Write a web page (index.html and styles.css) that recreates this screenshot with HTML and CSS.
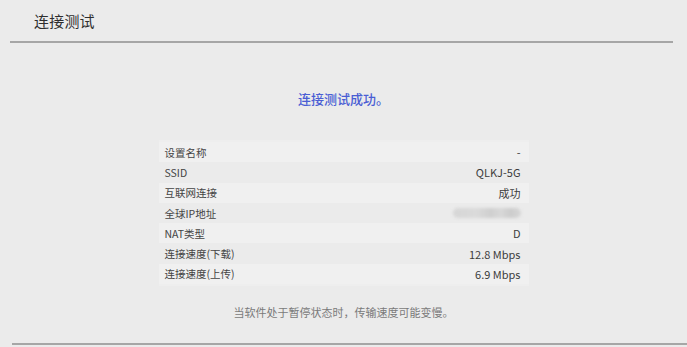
FILE: index.html
```html
<!DOCTYPE html>
<html lang="zh">
<head>
<meta charset="utf-8">
<link rel="stylesheet" href="styles.css">
</head>
<body>
<div class="page">
  <header class="header"><h1 class="title">连接测试</h1></header>
  <main class="content">
    <p class="success">连接测试成功。</p>
    <div class="table">
      <div class="row"><span class="k">设置名称</span><span class="v">-</span></div>
      <div class="row"><span class="k">SSID</span><span class="v">QLKJ-5G</span></div>
      <div class="row"><span class="k">互联网连接</span><span class="v">成功</span></div>
      <div class="row"><span class="k">全球IP地址</span><span class="v"><span class="blur"></span></span></div>
      <div class="row"><span class="k">NAT类型</span><span class="v">D</span></div>
      <div class="row"><span class="k">连接速度(下载)</span><span class="v">12.8 Mbps</span></div>
      <div class="row"><span class="k">连接速度(上传)</span><span class="v">6.9 Mbps</span></div>
    </div>
    <p class="note">当软件处于暂停状态时，传输速度可能变慢。</p>
  </main>
  <div class="bottom"></div>
</div>
</body>
</html>
```
FILE: styles.css
```css
html, body {
  margin: 0;
  padding: 0;
  background: #ebebeb;
}
body {
  font-family: "Noto Sans CJK SC", "Noto Sans", sans-serif;
  color: #3a3a3a;
  width: 687px;
  height: 347px;
  overflow: hidden;
}
.page {
  display: flex;
  flex-direction: column;
  height: 347px;
}
.header {
  margin: 0 14px 0 10px;
  height: 41px;
  border-bottom: 2px solid #a6a6a6;
  display: flex;
  align-items: center;
  padding-left: 24px;
}
.title {
  margin: 0;
  font-size: 15px;
  font-weight: 400;
  color: #2e2e2e;
  letter-spacing: 0.2px;
}
.content {
  flex: 1;
  display: flex;
  flex-direction: column;
  align-items: center;
}
.success {
  margin: 47px 0 0 0;
  font-size: 13px;
  line-height: 18px;
  color: #4a5ed4;
  font-weight: 500;
}
.table {
  margin-top: 32px;
  width: 370px;
  margin-left: 0;
  display: flex;
  flex-direction: column;
  padding: 2px 0;
  background: #eeeeee;
}
.row {
  height: 20.3px;
  display: flex;
  align-items: center;
  justify-content: space-between;
  padding: 0 8px 0 6px;
  font-size: 10.5px;
  color: #444;
}
.row:nth-child(odd) {
  background: #f0f0f0;
}
.row:nth-child(even) {
  background: #ebebeb;
}
.v {
  color: #3c3c3c;
  font-size: 11px;
}
.blur {
  display: block;
  width: 68px;
  height: 10px;
  border-radius: 5px;
  background: linear-gradient(90deg, #d6d6d6 0%, #dadada 35%, #cfcfcf 55%, #d8d8d8 70%, #cccccc 85%, #d6d6d6 100%);
  filter: blur(1.5px);
}
.note {
  margin: 18px 0 0 0;
  font-size: 11px;
  color: #7a7a7a;
}
.bottom {
  margin: 0 0 0 12px;
  height: 2px;
  background: #a6a6a6;
  margin-bottom: 2px;
}
```
